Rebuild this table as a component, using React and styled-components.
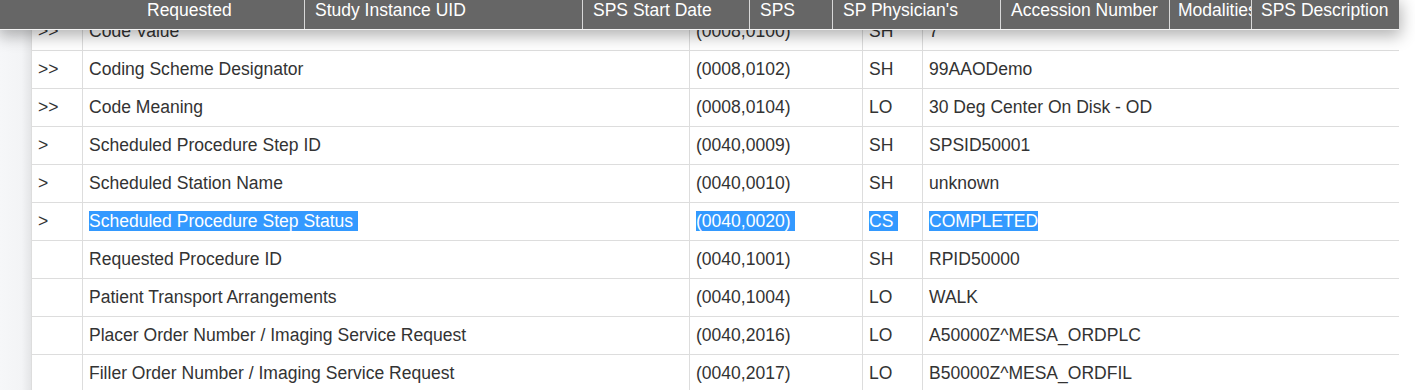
import React from "react";
import styled, { createGlobalStyle } from "styled-components";

const Global = createGlobalStyle`
  html, body { margin: 0; padding: 0; background: #fff; }
  body { font-family: "Liberation Sans", Arial, sans-serif; overflow: hidden; }
`;

const Page = styled.div`
  position: relative;
  width: 1415px;
  height: 390px;
  overflow: hidden;
  display: flex;
  background: #fff;
`;

const Gutter = styled.div`
  width: 31px;
  flex: none;
  background: linear-gradient(to right, #f6f7f9 0%, #f3f4f6 70%, #e4e5e7 100%);
`;

const Panel = styled.div`
  width: 1368px;
  flex: none;
  padding-top: 12px;
  background: #fff;
`;

const Header = styled.div`
  position: absolute;
  top: 0;
  left: 0;
  width: 1399px;
  height: 29px;
  display: flex;
  background: #666666;
  border-bottom: 1px solid #f4f4f4;
  box-shadow: 0 4px 16px 2px rgba(0, 0, 0, 0.3);
  z-index: 2;
`;

const HeadCell = styled.div`
  flex: none;
  box-sizing: border-box;
  width: ${(p) => p.$w}px;
  padding-left: ${(p) => p.$pl || 10}px;
  border-left: ${(p) => (p.$first ? "none" : "1px solid #d8d8d8")};
  color: #fff;
  font-size: 17.5px;
  line-height: 20px;
  white-space: nowrap;
  overflow: hidden;
`;

const Table = styled.table`
  border-collapse: separate;
  border-spacing: 0;
  table-layout: fixed;
  width: 1368px;
  font-size: 17.55px;
  color: #333;
`;

const Cell = styled.td`
  box-sizing: border-box;
  padding: 9px 7px 9px 6px;
  line-height: 19px;
  border-top: 1px solid #dddddd;
  border-left: 1px solid #dddddd;
  white-space: nowrap;
  overflow: hidden;
  vertical-align: middle;
`;

const Sel = styled.span`
  background: #3399ff;
  color: #fff;
`;

const headers = [
  { w: 304, t: "Requested", pl: 147, first: true },
  { w: 278, t: "Study Instance UID" },
  { w: 167, t: "SPS Start Date" },
  { w: 83, t: "SPS" },
  { w: 168, t: "SP Physician's" },
  { w: 169, t: "Accession Number" },
  { w: 82, t: "Modalities", pl: 8 },
  { w: 148, t: "SPS Description", pl: 9 },
];

const rows = [
  [">>", "Code Value", "(0008,0100)", "SH", "7"],
  [">>", "Coding Scheme Designator", "(0008,0102)", "SH", "99AAODemo"],
  [">>", "Code Meaning", "(0008,0104)", "LO", "30 Deg Center On Disk - OD"],
  [">", "Scheduled Procedure Step ID", "(0040,0009)", "SH", "SPSID50001"],
  [">", "Scheduled Station Name", "(0040,0010)", "SH", "unknown"],
  [">", "Scheduled Procedure Step Status", "(0040,0020)", "CS", "COMPLETED", true],
  ["", "Requested Procedure ID", "(0040,1001)", "SH", "RPID50000"],
  ["", "Patient Transport Arrangements", "(0040,1004)", "LO", "WALK"],
  ["", "Placer Order Number / Imaging Service Request", "(0040,2016)", "LO", "A50000Z^MESA_ORDPLC"],
  ["", "Filler Order Number / Imaging Service Request", "(0040,2017)", "LO", "B50000Z^MESA_ORDFIL"],
];

const widths = [51, 607, 173, 60, 477];

export default function App() {
  return (
    <>
      <Global />
      <Page>
        <Header>
          {headers.map((h) => (
            <HeadCell key={h.t} $w={h.w} $pl={h.pl} $first={h.first}>
              {h.t}
            </HeadCell>
          ))}
        </Header>
        <Gutter />
        <Panel>
          <Table>
            <colgroup>
              {widths.map((w, i) => (
                <col key={i} style={{ width: w }} />
              ))}
            </colgroup>
            <tbody>
              {rows.map((r) => (
                <tr key={r[1]}>
                  <Cell>{r[0]}</Cell>
                  <Cell>{r[5] ? <Sel>{r[1]}{"\u00a0"}</Sel> : r[1]}</Cell>
                  <Cell>{r[5] ? <Sel>{r[2]}{"\u00a0"}</Sel> : r[2]}</Cell>
                  <Cell>{r[5] ? <Sel>{r[3]}{"\u00a0"}</Sel> : r[3]}</Cell>
                  <Cell>{r[5] ? <Sel>{r[4]}</Sel> : r[4]}</Cell>
                </tr>
              ))}
            </tbody>
          </Table>
        </Panel>
      </Page>
    </>
  );
}
